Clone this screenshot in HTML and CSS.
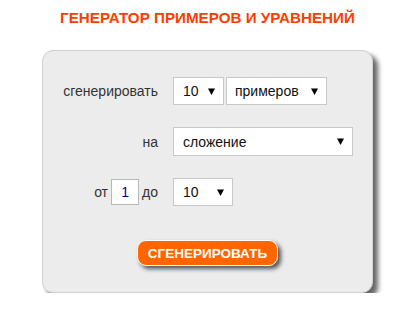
FILE: index.html
```html
<!DOCTYPE html>
<html lang="ru">
<head>
    <meta charset="UTF-8">
    <meta name="viewport" content="width=device-width, initial-scale=1.0">
    <title>Генератор примеров и уравнений</title>
    <link rel="stylesheet" href="styles.css">
</head>
<body>
    <div class="wrap">
        <h1 class="title">Генератор примеров и уравнений</h1>

        <form class="panel">
            <div class="form-grid">
                <label class="label">сгенерировать</label>
                <div class="controls">
                    <select class="sel sel-num">
                        <option>10</option>
                    </select>
                    <select class="sel sel-kind">
                        <option>примеров</option>
                    </select>
                </div>

                <label class="label">на</label>
                <div class="controls">
                    <select class="sel sel-op">
                        <option>сложение</option>
                    </select>
                </div>

                <div class="label range">
                    <span>от</span>
                    <input class="num-input" type="text" value="1">
                    <span>до</span>
                </div>
                <div class="controls">
                    <select class="sel sel-max">
                        <option>10</option>
                    </select>
                </div>
            </div>

            <div class="actions">
                <button type="button" class="btn">Сгенерировать</button>
            </div>
        </form>
    </div>
</body>
</html>
```

FILE: styles.css
```css
body {
    margin: 0;
    background: #fff;
    font-family: "Liberation Sans", Arial, sans-serif;
    color: #333;
}
.wrap {
    width: 331px;
    margin-left: 42px;
}
.title {
    margin: 0 -20px;
    padding-top: 9px;
    height: 50px;
    box-sizing: border-box;
    text-align: center;
    text-transform: uppercase;
    font-size: 15.2px;
    font-weight: bold;
    line-height: 18px;
    color: #ff3c00;
    white-space: nowrap;
}
.panel {
    background: #ececec;
    border: 1px solid #d0d0d0;
    border-radius: 11px;
    box-shadow: 5px 5px 5px #666;
    padding: 26px 0 27px;
    height: 243px;
    box-sizing: border-box;
}
.form-grid {
    display: grid;
    grid-template-columns: 115px auto;
    column-gap: 15px;
    row-gap: 22px;
    align-items: center;
}
.label {
    text-align: right;
    font-size: 14px;
}
.controls {
    display: flex;
    gap: 2px;
}
.range {
    display: flex;
    justify-content: flex-end;
    align-items: center;
    gap: 3px;
}
.num-input {
    width: 28px;
    height: 26px;
    box-sizing: border-box;
    border: 1px solid #b8b8b8;
    background: #fff;
    text-align: center;
    font-family: inherit;
    font-size: 14px;
    color: #000080;
    padding: 0;
}
.sel {
    -webkit-appearance: none;
    appearance: none;
    height: 28px;
    border: 1px solid #c8c8c8;
    border-radius: 0;
    background: #fff url("data:image/svg+xml;utf8,<svg xmlns='http://www.w3.org/2000/svg' width='7' height='7'><path d='M0 0.5h7L3.5 7z' fill='black'/></svg>") no-repeat right 8px center;
    font-family: inherit;
    font-size: 14px;
    color: #111;
    padding: 0 0 0 9px;
    margin: 0;
}
.sel-num { width: 51px; }
.sel-kind { width: 101px; padding-left: 8px; }
.sel-op { width: 180px; height: 29px; }
.sel-max { width: 60px; }
.actions {
    display: flex;
    justify-content: center;
    margin-top: 34px;
}
.btn {
    height: 26px;
    padding: 0 10px;
    border: 1px solid #fff;
    border-radius: 9px;
    background: #ff6600;
    color: #fff;
    font-family: inherit;
    font-size: 13.5px;
    font-weight: bold;
    text-transform: uppercase;
    box-shadow: 3px 3px 4px #555;
}
```
